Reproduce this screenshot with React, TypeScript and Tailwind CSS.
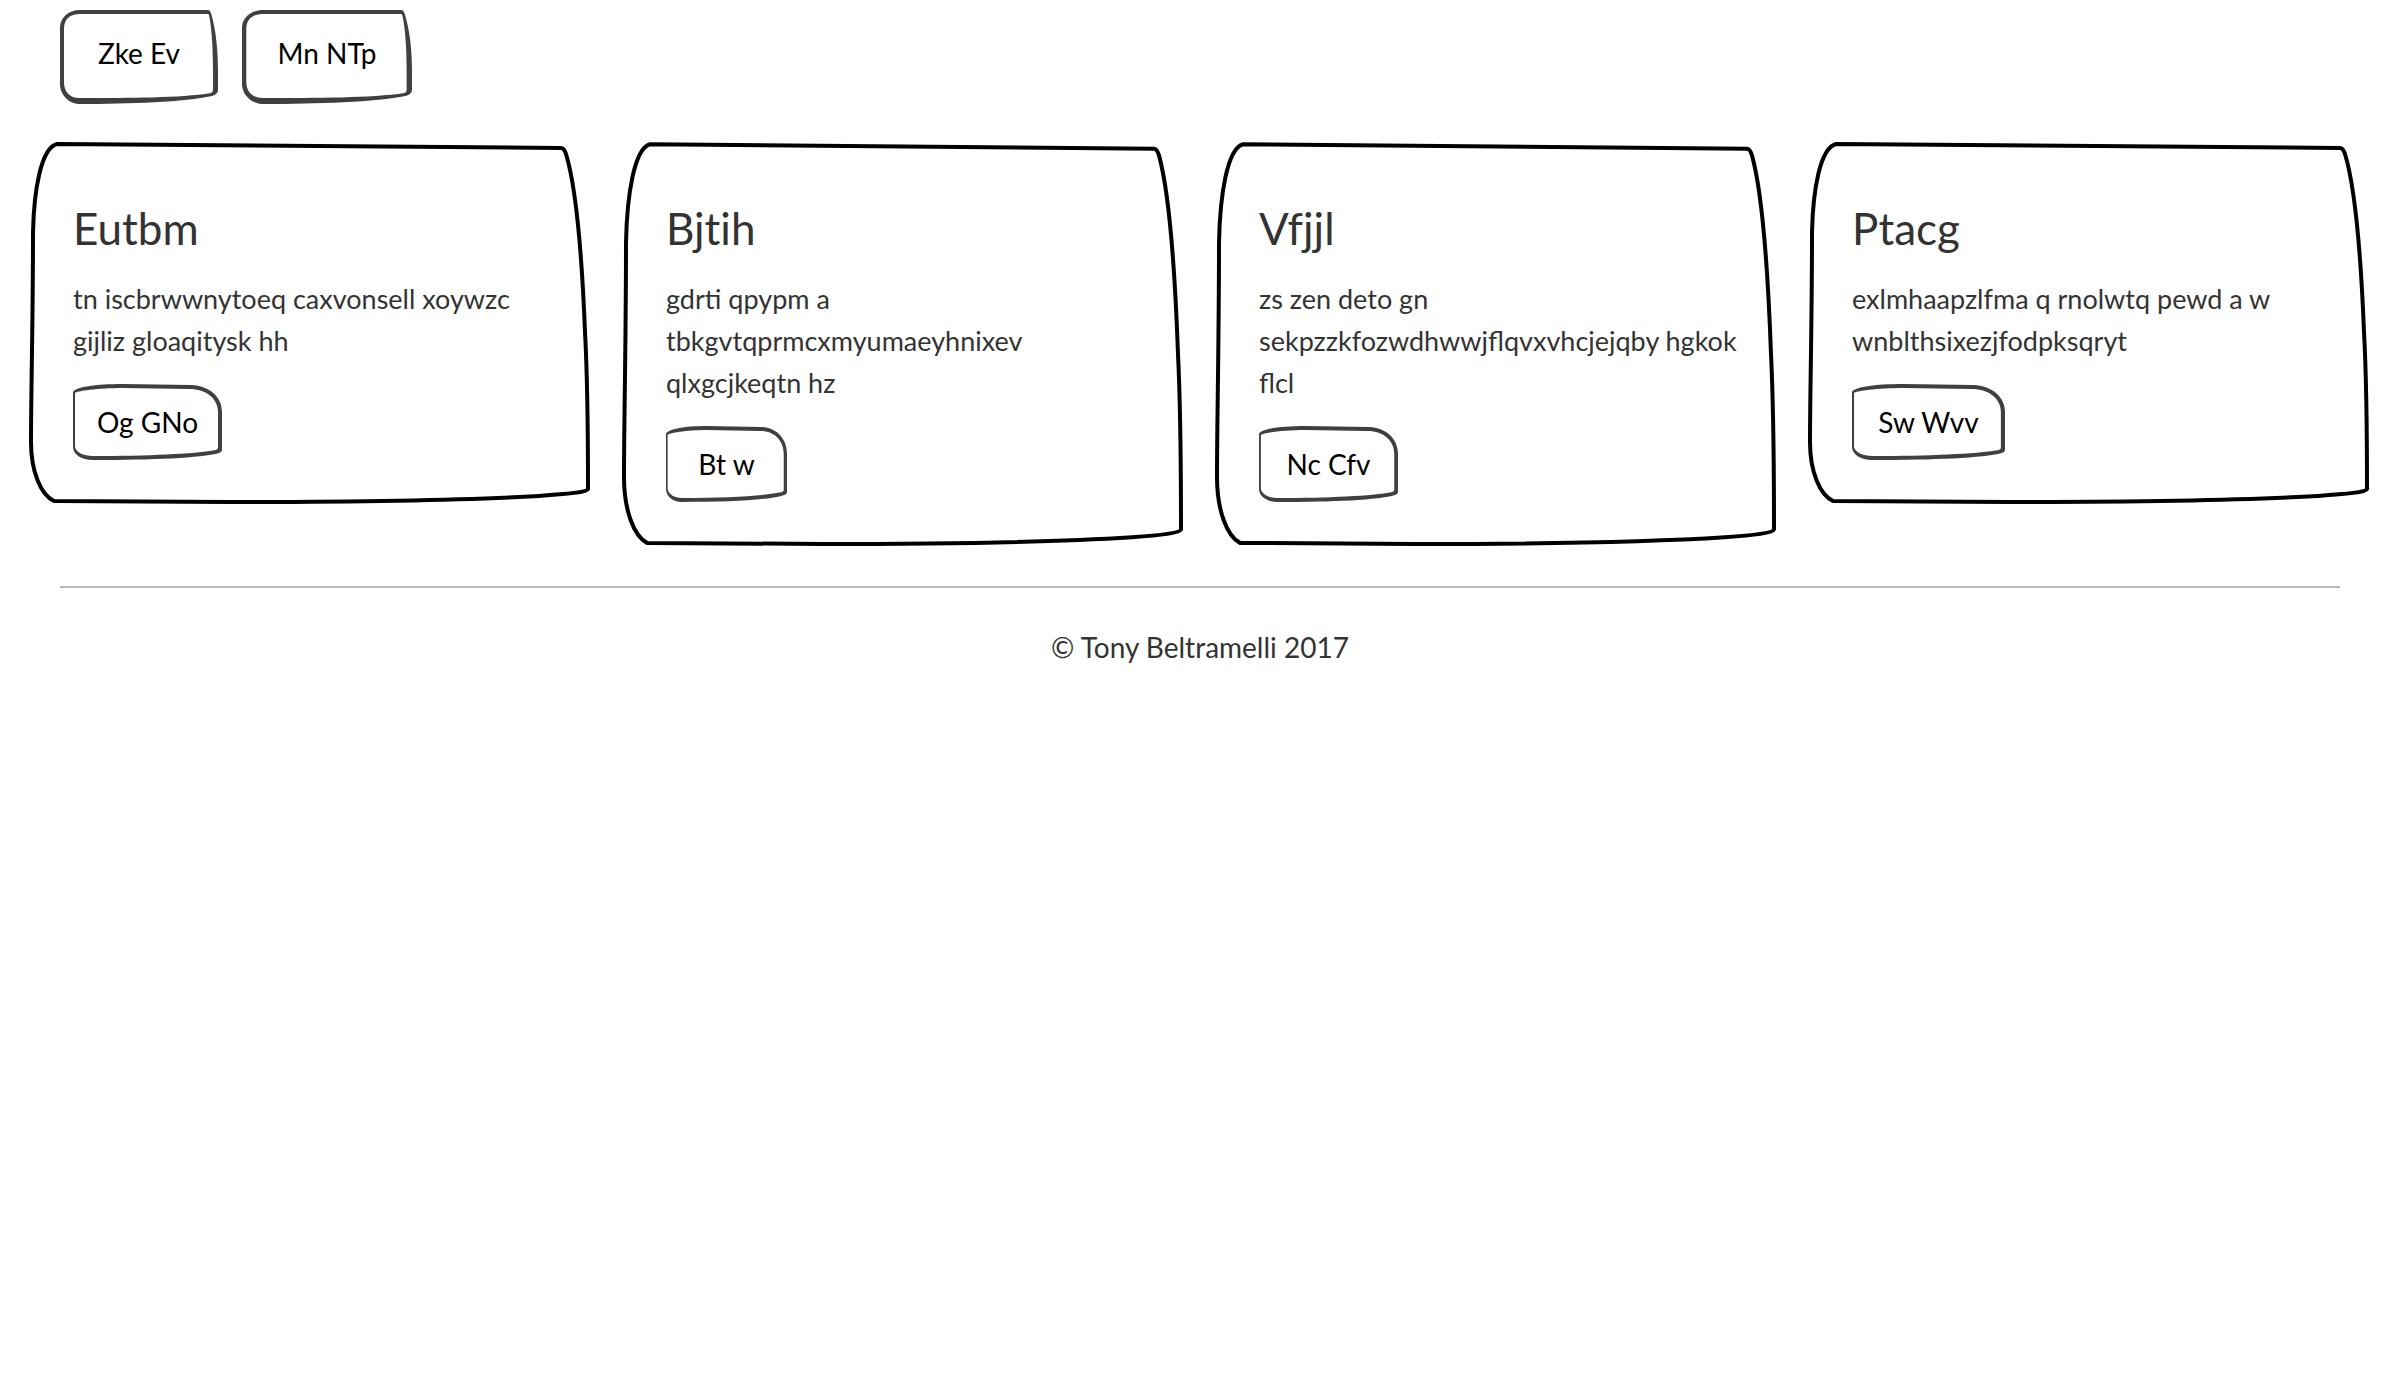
import React from "react";

type Card = { title: string; text: string; action: string; width: string };

const cards: Card[] = [
  { title: "Eutbm", text: "tn iscbrwwnytoeq caxvonsell xoywzc gijliz gloaqitysk hh", action: "Og GNo", width: "w-[149px]" },
  { title: "Bjtih", text: "gdrti qpypm a tbkgvtqprmcxmyumaeyhnixev qlxgcjkeqtn hz", action: "Bt w", width: "w-[121px]" },
  { title: "Vfjjl", text: "zs zen deto gn sekpzzkfozwdhwwjflqvxvhcjejqby hgkok flcl", action: "Nc Cfv", width: "w-[139px]" },
  { title: "Ptacg", text: "exlmhaapzlfma q rnolwtq pewd a w wnblthsixezjfodpksqryt", action: "Sw Wvv", width: "w-[153px]" },
];

const frame = "pointer-events-none absolute inset-0 h-full w-full overflow-visible";

function NavButton({ label, width }: { label: string; width: string }) {
  return (
    <button type="button" className={`relative h-[94px] pb-2 text-black ${width}`}>
      <svg className={frame} viewBox="0 0 158 94" preserveAspectRatio="none" aria-hidden="true">
        <path
          fill="#404040"
          fillRule="evenodd"
          d="M20 0H148Q150 0 151 3C156 20 158 40 158 62V80Q158 84 152 86C125 92 70 94 20 94C8 94 0 84 0 74V18C0 8 8 0 20 0Z M20 4C10 4 4 9 4 19V72C4 82 10 88 19 88C70 88 120 88 151 83Q153 82 153 80V62C153 40 152 20 149 5Q149 4 147 4Z"
        />
      </svg>
      {label}
    </button>
  );
}

function CardButton({ label, width }: { label: string; width: string }) {
  return (
    <button type="button" className={`relative block h-[75px] text-black ${width}`}>
      <svg className={frame} viewBox="0 0 149 75" preserveAspectRatio="none" aria-hidden="true">
        <path
          fill="#404040"
          fillRule="evenodd"
          d="M0 8C2 3 22 0 50 0L118 1C137 2 149 13 149 28V66Q149 68 146 69C128 74 80 76 20 76C8 76 0 70 0 63Z M2 9V63C3 68 10 72 20 72C75 72 120 70 143 66Q145 65 145 64V28C145 15 134 5 116 5L50 4C25 4 3 7 2 9Z"
        />
      </svg>
      {label}
    </button>
  );
}

function SketchCard({ card }: { card: Card }) {
  return (
    <section className="relative pt-14 pr-8 pb-[43px] pl-11">
      <svg className={frame} viewBox="0 0 561 360" preserveAspectRatio="none" aria-hidden="true">
        <path
          fill="none"
          stroke="#000"
          strokeWidth="4"
          strokeLinejoin="round"
          vectorEffect="non-scaling-stroke"
          d="M28 2L532 6Q535 6 537 12C548 48 553 115 556 190C559 245 559 290 559 347C558 350 540 352 510 354C440 358 330 360 200 360L25 359C12 353 2 330 2 300C2 250 4 180 4 90C5 48 12 6 28 2Z"
        />
      </svg>
      <h2 className="text-[44px] leading-[60px] text-[#333] [font-variant-ligatures:none]">{card.title}</h2>
      <p className="mt-5 mb-[22px] text-[27px] leading-[42px] text-[#333]">{card.text}</p>
      <CardButton label={card.action} width={card.width} />
    </section>
  );
}

export default function App() {
  return (
    <div className="min-h-screen bg-white pt-[10px] font-['Lato',sans-serif] text-[28px] text-[#333]">
      <nav className="flex gap-6 px-[60px]">
        <NavButton label="Zke Ev" width="w-[158px]" />
        <NavButton label="Mn NTp" width="w-[170px]" />
      </nav>
      <main className="mt-[38px] grid grid-cols-4 items-start gap-8 pr-[31px] pl-[29px]">
        {cards.map((card) => (
          <SketchCard key={card.title} card={card} />
        ))}
      </main>
      <footer className="mx-[60px] mt-[42px] border-t-2 border-[#b8b8b8] pt-[38px] text-center leading-[42px]">
        © Tony Beltramelli 2017
      </footer>
    </div>
  );
}
